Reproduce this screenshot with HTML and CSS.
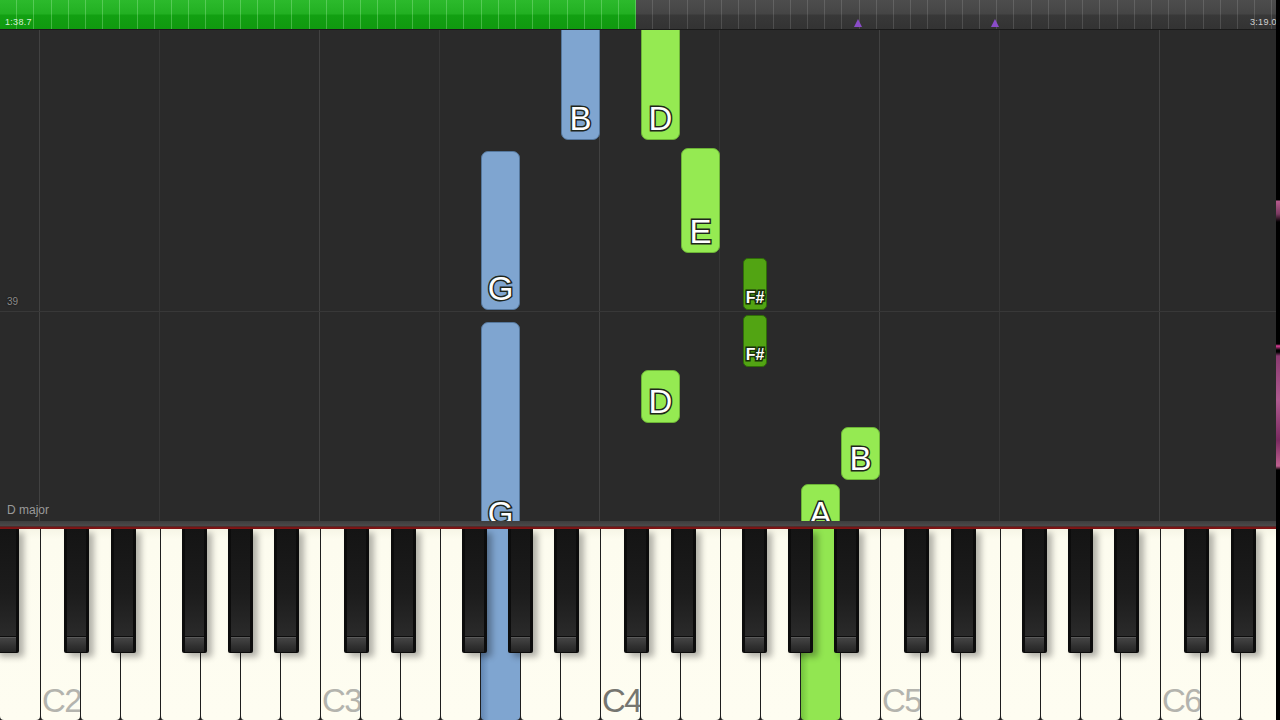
FILE: index.html
```html
<!DOCTYPE html>
<html>
<head>
<meta charset="utf-8">
<title>Piano roll</title>
<link rel="stylesheet" href="styles.css">
</head>
<body>
<div class="app">
  <div class="main">
    <div class="timeline">
      <div class="played"><span class="time">1:38.7</span></div>
      <div class="remaining">
        <span class="marker" style="left:222px"></span>
        <span class="marker" style="left:359px"></span>
        <span class="time end">3:19.0</span>
      </div>
    </div>

    <div class="roll">
      <span class="vline c" style="left:39px"></span>
      <span class="vline" style="left:159px"></span>
      <span class="vline c" style="left:319px"></span>
      <span class="vline" style="left:439px"></span>
      <span class="vline c" style="left:599px"></span>
      <span class="vline" style="left:719px"></span>
      <span class="vline c" style="left:879px"></span>
      <span class="vline" style="left:999px"></span>
      <span class="vline c" style="left:1159px"></span>
      <span class="hline" style="top:281px"></span>
      <span class="measure">39</span>
      <span class="key-name">D major</span>

      <div class="note blue" style="left:561px;top:-12px;height:122px"><span class="lbl">B</span></div>
      <div class="note green" style="left:641px;top:-12px;height:122px"><span class="lbl">D</span></div>
      <div class="note green" style="left:681px;top:118px;height:105px"><span class="lbl">E</span></div>
      <div class="note blue" style="left:481px;top:121px;height:159px"><span class="lbl">G</span></div>
      <div class="note dark small" style="left:743px;top:228px;height:52px"><span class="lbl">F#</span></div>
      <div class="note dark small" style="left:743px;top:285px;height:52px"><span class="lbl">F#</span></div>
      <div class="note blue" style="left:481px;top:292px;height:213px"><span class="lbl">G</span></div>
      <div class="note green" style="left:641px;top:340px;height:53px"><span class="lbl">D</span></div>
      <div class="note green" style="left:841px;top:397px;height:53px"><span class="lbl">B</span></div>
      <div class="note green" style="left:801px;top:454px;height:51px"><span class="lbl">A</span></div>
    </div>

    <div class="kb-rail"></div>

    <div class="keys">
      <div class="wk"></div>
      <div class="wk"><span class="oct">C2</span></div>
      <div class="wk"></div><div class="wk"></div><div class="wk"></div><div class="wk"></div><div class="wk"></div><div class="wk"></div>
      <div class="wk"><span class="oct">C3</span></div>
      <div class="wk"></div><div class="wk"></div><div class="wk"></div>
      <div class="wk hl-blue"></div>
      <div class="wk"></div><div class="wk"></div>
      <div class="wk"><span class="oct mid">C4</span></div>
      <div class="wk"></div><div class="wk"></div><div class="wk"></div><div class="wk"></div>
      <div class="wk hl-green"></div>
      <div class="wk"></div>
      <div class="wk"><span class="oct">C5</span></div>
      <div class="wk"></div><div class="wk"></div><div class="wk"></div><div class="wk"></div><div class="wk"></div><div class="wk"></div>
      <div class="wk"><span class="oct">C6</span></div>
      <div class="wk"></div><div class="wk"></div>

      <span class="bk" style="left:-6px"></span>
      <span class="bk" style="left:64px"></span>
      <span class="bk" style="left:111px"></span>
      <span class="bk" style="left:182px"></span>
      <span class="bk" style="left:228px"></span>
      <span class="bk" style="left:274px"></span>
      <span class="bk" style="left:344px"></span>
      <span class="bk" style="left:391px"></span>
      <span class="bk" style="left:462px"></span>
      <span class="bk" style="left:508px"></span>
      <span class="bk" style="left:554px"></span>
      <span class="bk" style="left:624px"></span>
      <span class="bk" style="left:671px"></span>
      <span class="bk" style="left:742px"></span>
      <span class="bk" style="left:788px"></span>
      <span class="bk" style="left:834px"></span>
      <span class="bk" style="left:904px"></span>
      <span class="bk" style="left:951px"></span>
      <span class="bk" style="left:1022px"></span>
      <span class="bk" style="left:1068px"></span>
      <span class="bk" style="left:1114px"></span>
      <span class="bk" style="left:1184px"></span>
      <span class="bk" style="left:1231px"></span>
    </div>
  </div>
  <div class="edge"></div>
</div>
</body>
</html>
```

FILE: styles.css
```css
* { box-sizing: border-box; }

html, body {
  margin: 0;
  padding: 0;
  width: 1280px;
  height: 720px;
  overflow: hidden;
  background: #000;
  font-family: "Liberation Sans", Arial, sans-serif;
}

.app {
  display: flex;
  width: 1280px;
  height: 720px;
}

.main {
  width: 1276px;
  height: 720px;
  display: flex;
  flex-direction: column;
  overflow: hidden;
}

.edge {
  width: 4px;
  height: 720px;
  background:
    linear-gradient(to bottom,
      #000 0, #000 200px,
      #b85a8e 201px, #7a3a60 214px, #000 222px,
      #000 344px, #e0409a 346px, #000 350px,
      #000 352px, #8a3a70 356px, #b05a90 400px, #7a2a60 440px, #c06090 466px, #000 470px,
      #000 100%);
}

/* ---------- timeline ---------- */
.timeline {
  height: 30px;
  flex: none;
  display: flex;
  border-bottom: 1px solid #1a1a1a;
}

.played, .remaining {
  position: relative;
  height: 100%;
}

.played {
  width: 636px;
  background:
    repeating-linear-gradient(to right, transparent 0, transparent 16.2px, rgba(200,255,200,0.28) 16.2px, rgba(200,255,200,0.28) 17.2px),
    linear-gradient(to bottom, #2cba2c 0%, #22b022 48%, #12a012 52%, #10990f 100%);
}

.remaining {
  flex: 1;
  overflow: hidden;
  background:
    repeating-linear-gradient(to right, transparent 0, transparent 16.2px, rgba(255,255,255,0.13) 16.2px, rgba(255,255,255,0.13) 17.2px),
    linear-gradient(to bottom, #4d4d4d 0%, #454545 48%, #383838 52%, #333 100%);
}

.time {
  position: absolute;
  left: 5px;
  bottom: 2px;
  font-size: 9px;
  line-height: 10px;
  color: #d6f0d6;
  letter-spacing: 0.3px;
  white-space: nowrap;
}

.time.end {
  left: 614px;
  color: #d0d0d0;
}

.marker {
  position: absolute;
  bottom: 2px;
  width: 0;
  height: 0;
  margin-left: -4px;
  border-left: 4px solid transparent;
  border-right: 4px solid transparent;
  border-bottom: 8px solid #8a4cc8;
}

/* ---------- roll ---------- */
.roll {
  position: relative;
  flex: 1;
  background: #2a2a2a;
  overflow: hidden;
}

.vline {
  position: absolute;
  top: 0;
  bottom: 0;
  width: 1px;
  background: #363636;
}

.vline.c {
  background: #414141;
}

.hline {
  position: absolute;
  left: 0;
  right: 0;
  height: 1px;
  background: #383838;
}

.measure {
  position: absolute;
  left: 7px;
  top: 266px;
  font-size: 10px;
  color: #8a8a8a;
  text-shadow: 0 0 2px #111;
}

.key-name {
  position: absolute;
  left: 7px;
  top: 473px;
  font-size: 12px;
  color: #9a9a9a;
}

.note {
  position: absolute;
  width: 39px;
  border-radius: 7px;
  display: flex;
  flex-direction: column;
  justify-content: flex-end;
  align-items: center;
  padding-bottom: 4px;
}

.note.blue {
  background: #7fa5d0;
  border: 1px solid #55779c;
}

.note.green {
  background: #95ea52;
  border: 1px solid #6cb336;
}

.note.dark {
  width: 24px;
  background: #52a413;
  border: 1px solid #2f6c08;
  border-radius: 5px;
  padding-bottom: 3px;
}

.lbl {
  font-size: 33px;
  line-height: 1;
  color: #fff;
  -webkit-text-stroke: 3px #1e261c;
  paint-order: stroke fill;
}

.note.small .lbl {
  font-size: 16px;
  font-weight: bold;
  -webkit-text-stroke: 3px #17300a;
}

/* ---------- keyboard ---------- */
.kb-rail {
  flex: none;
  height: 8px;
  background: linear-gradient(to bottom, #3e3e3e 0, #4a4a4a 5px, #5a1010 6px, #9a1c1c 7px, #6a0e0e 8px);
}

.keys {
  flex: none;
  position: relative;
  height: 191px;
  display: flex;
  background: #222;
}

.wk {
  flex: none;
  width: 40px;
  height: 100%;
  background: linear-gradient(to bottom, #f6f5e6 0, #fdfcef 10px, #fefdf1 100%);
  border-left: 1px solid #1e1e1e;
  border-radius: 0 0 4px 4px;
  display: flex;
  flex-direction: column;
  justify-content: flex-end;
  padding-bottom: 3px;
}

.wk:first-child {
  border-left: none;
}

.wk.hl-blue {
  background: linear-gradient(to right, #6488b3 0, #7fa5d0 8px, #7fa5d0 100%);
}

.wk.hl-green {
  background: linear-gradient(to right, #75c43e 0, #92e651 8px, #92e651 100%);
}

.oct {
  font-size: 33px;
  line-height: 1;
  letter-spacing: -1.5px;
  padding-left: 1px;
  color: #b4b4ae;
  white-space: nowrap;
}

.oct.mid {
  color: #767670;
}

.bk {
  position: absolute;
  top: 0;
  width: 25px;
  height: 124px;
  background: #0c0c0c;
  border-radius: 0 0 2px 2px;
  box-shadow: 5px 4px 6px rgba(0,0,0,0.3);
}

.bk::before {
  content: "";
  position: absolute;
  left: 3px;
  right: 3px;
  top: 0;
  height: 107px;
  background: linear-gradient(to bottom, #141414 0, #1c1c1c 60%, #2a2a2a 100%);
}

.bk::after {
  content: "";
  position: absolute;
  left: 3px;
  right: 3px;
  top: 108px;
  height: 14px;
  border-top: 1px solid #5a5a5a;
  background: linear-gradient(to bottom, #444 0, #303030 60%, #242424 100%);
}
```
